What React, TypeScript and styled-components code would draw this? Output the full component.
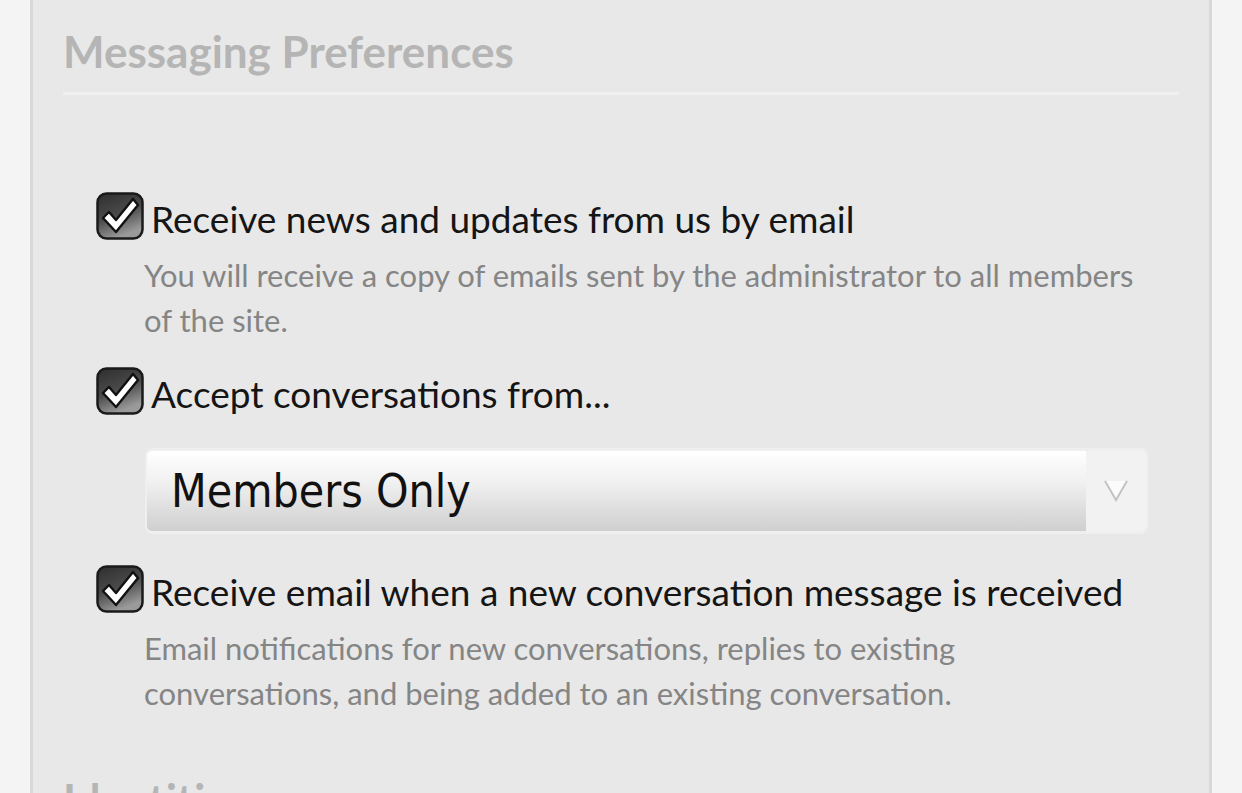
import React from "react";
import styled, { createGlobalStyle } from "styled-components";

const Global = createGlobalStyle`
  html, body { margin: 0; padding: 0; background: #f4f4f4; }
  body { font-family: Lato, "Noto Sans", sans-serif; overflow: hidden; }
`;

const Page = styled.div`
  width: 1242px;
  height: 793px;
  overflow: hidden;
  padding-left: 30px;
  box-sizing: border-box;
`;

const Panel = styled.section`
  width: 1182px;
  min-height: 900px;
  box-sizing: border-box;
  background: #e8e8e8;
  border-left: 3px solid #d8d8d8;
  border-right: 3px solid #d8d8d8;
  padding: 24px 30px 0 30px;
`;

const Heading = styled.h2`
  margin: 0;
  font-family: Lato, sans-serif;
  font-weight: 700;
  font-size: 44px;
  line-height: 54px;
  color: #b5b5b5;
  padding-bottom: 14px;
  border-bottom: 3px solid #f0f0f0;
`;

const List = styled.div`
  padding: 97px 0 0 33px;
  display: flex;
  flex-direction: column;
`;

const Option = styled.div<{ $gap?: number }>`
  display: flex;
  flex-direction: column;
  margin-bottom: ${(p) => p.$gap ?? 0}px;
`;

const LabelRow = styled.label`
  display: flex;
  align-items: flex-start;
  gap: 7px;
  height: 48px;
`;

const LabelText = styled.span`
  font-family: Lato, sans-serif;
  font-size: 37px;
  color: #151515;
  line-height: 48px;
  padding-top: 3px;
  white-space: nowrap;
`;

const Hint = styled.p`
  margin: 13px 0 0 48px;
  font-family: Lato, sans-serif;
  font-size: 31px;
  line-height: 45px;
  color: #858585;
  max-width: 1010px;
`;

const SelectBox = styled.div`
  margin: 33px 0 0 49px;
  width: 1003px;
  height: 86px;
  box-sizing: border-box;
  border-radius: 8px;
  background: #efefef;
  padding: 3px 2px 3px 2px;
  display: flex;
`;

const SelectValue = styled.div`
  flex: 1;
  border-radius: 5px 0 0 5px;
  background: linear-gradient(#ffffff 0%, #f0f0f0 40%, #cfcfcf 100%);
  display: flex;
  align-items: center;
  padding-left: 24px;
  font-family: "DejaVu Sans Condensed", "DejaVu Sans", Verdana, sans-serif;
  font-stretch: condensed;
  font-size: 46px;
  color: #111;
`;

const SelectArrow = styled.div`
  width: 60px;
  display: flex;
  align-items: center;
  justify-content: center;
  background: #f2f2f2;
  border-radius: 0 5px 5px 0;
`;

const CheckIcon = () => (
  <svg width="48" height="48" viewBox="0 0 48 48">
    <defs>
      <linearGradient id="cbg" x1="0" y1="0" x2="0.4" y2="1">
        <stop offset="0" stopColor="#2e2e2e" />
        <stop offset="0.55" stopColor="#4a4a4a" />
        <stop offset="1" stopColor="#9a9a9a" />
      </linearGradient>
    </defs>
    <rect x="1.5" y="1.5" width="45" height="45" rx="9" fill="url(#cbg)" stroke="#1a1a1a" strokeWidth="2.5" />
    <path
      d="M7 26 L13 20 L20 28 L37 7 L42 13 L20 40 Z"
      fill="#fff"
      stroke="#111"
      strokeWidth="2.4"
      strokeLinejoin="round"
    />
  </svg>
);

const Arrow = () => (
  <svg width="24" height="22" viewBox="0 0 24 22">
    <path d="M1 1 L23 1 L12 20 Z" fill="#fbfbfb" />
    <path d="M1 1 L12 20 L23 1" fill="none" stroke="#c2c2c2" strokeWidth="2" />
  </svg>
);

export default function App() {
  return (
    <>
      <Global />
      <Page>
        <Panel>
          <Heading>Messaging Preferences</Heading>
          <List>
            <Option $gap={24}>
              <LabelRow>
                <CheckIcon />
                <LabelText>Receive news and updates from us by email</LabelText>
              </LabelRow>
              <Hint>You will receive a copy of emails sent by the administrator to all members of the site.</Hint>
            </Option>
            <Option $gap={31}>
              <LabelRow>
                <CheckIcon />
                <LabelText>Accept conversations from...</LabelText>
              </LabelRow>
              <SelectBox>
                <SelectValue>Members Only</SelectValue>
                <SelectArrow>
                  <Arrow />
                </SelectArrow>
              </SelectBox>
            </Option>
            <Option $gap={56}>
              <LabelRow>
                <CheckIcon />
                <LabelText>Receive email when a new conversation message is received</LabelText>
              </LabelRow>
              <Hint>Email notifications for new conversations, replies to existing conversations, and being added to an existing conversation.</Hint>
            </Option>
          </List>
          <Heading>Identities</Heading>
        </Panel>
      </Page>
    </>
  );
}
